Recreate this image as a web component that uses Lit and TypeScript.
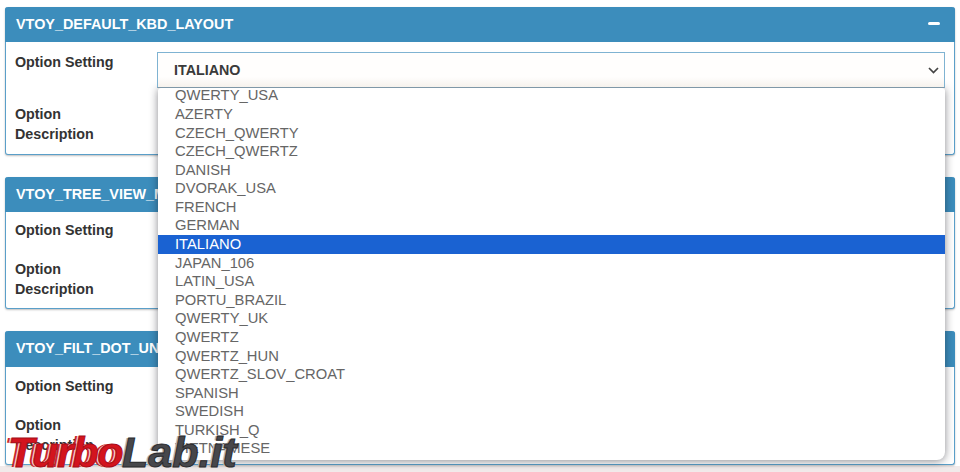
import { LitElement, html, css } from "lit";
import { customElement } from "lit/decorators.js";

const OPTIONS = [
  "QWERTY_USA",
  "AZERTY",
  "CZECH_QWERTY",
  "CZECH_QWERTZ",
  "DANISH",
  "DVORAK_USA",
  "FRENCH",
  "GERMAN",
  "ITALIANO",
  "JAPAN_106",
  "LATIN_USA",
  "PORTU_BRAZIL",
  "QWERTY_UK",
  "QWERTZ",
  "QWERTZ_HUN",
  "QWERTZ_SLOV_CROAT",
  "SPANISH",
  "SWEDISH",
  "TURKISH_Q",
  "VIETNAMESE",
];

const CARDS = [
  { name: "VTOY_DEFAULT_KBD_LAYOUT", cls: "first" },
  { name: "VTOY_TREE_VIEW_MENU_STYLE", cls: "second" },
  { name: "VTOY_FILT_DOT_UNDERSCORE_FILE", cls: "third" },
];

@customElement("app-root")
export class AppRoot extends LitElement {
  static styles = css`
    :host {
      display: block;
      position: relative;
      width: 960px;
      height: 472px;
      overflow: hidden;
      background: linear-gradient(#fff 466px, #f1eaea 466px);
      font-family: "Liberation Sans", Arial, sans-serif;
      color: #333;
    }
    .page {
      display: flex;
      flex-direction: column;
      gap: 22px;
      padding: 7px 5px 0;
    }
    .card {
      background: #fff;
      border: 1px solid #5a9fc9;
      border-top-width: 0;
      border-radius: 3px;
      box-shadow: 0 1px 2px rgba(0, 0, 0, 0.25);
      box-sizing: border-box;
    }
    .first {
      height: 148px;
    }
    .second {
      height: 132px;
    }
    .third {
      height: 134px;
    }
    .head {
      display: flex;
      justify-content: space-between;
      align-items: center;
      height: 35px;
      margin: 0 -1px;
      padding: 0 15px 2px 11px;
      box-sizing: border-box;
      background: #3c8dbc;
      border-radius: 3px 3px 0 0;
      color: #fff;
      font-size: 14.4px;
      font-weight: 700;
    }
    .third .head {
      height: 36px;
    }
    .minus {
      width: 12px;
      height: 3px;
      border-radius: 2px;
      background: #fff;
    }
    .row {
      display: flex;
      padding: 9px 9px 0;
      font-size: 14.3px;
      font-weight: 700;
      line-height: 20px;
    }
    .first .row {
      padding-top: 10px;
    }
    .second .row {
      padding-top: 8px;
    }
    .row + .gap + .row,
    .first .row + .gap + .row,
    .second .row + .gap + .row {
      padding-top: 0;
    }
    .label {
      width: 142px;
      flex: none;
    }
    .first .gap {
      height: 32px;
    }
    .second .gap,
    .third .gap {
      height: 19px;
    }
    .select {
      position: absolute;
      z-index: 1;
      left: 157px;
      top: 52px;
      width: 788px;
      height: 36px;
      box-sizing: border-box;
      display: flex;
      align-items: center;
      justify-content: space-between;
      padding: 0 5px 0 16px;
      background: linear-gradient(#fffefd 70%, #f6f2ed);
      border: 1px solid #7fb3d2;
      border-bottom-color: #7f98a8;
      font-size: 14.3px;
      font-weight: 700;
      color: #3a3a3a;
    }
    .menu {
      position: absolute;
      left: 158px;
      top: 88px;
      width: 787px;
      height: 372px;
      overflow: hidden;
      background: #fff;
      border-radius: 3px 3px 8px 8px;
      box-shadow: 0 1px 9px rgba(20, 20, 30, 0.5);
    }
    .list {
      margin-top: -1.6px;
      font-size: 14.75px;
      color: #666;
    }
    .option {
      height: 18.58px;
      line-height: 18.58px;
      padding-left: 17px;
      white-space: nowrap;
    }
    .option.on {
      background: #1a62d2;
      color: #fff;
    }
    .logo {
      position: absolute;
      z-index: 2;
      left: 8px;
      top: 428px;
      font-size: 43px;
      line-height: 48px;
      font-weight: 700;
      font-style: italic;
      white-space: nowrap;
    }
    .logo .turbo {
      letter-spacing: -1.4px;
      color: #d3141e;
      -webkit-text-stroke: 1px #a80d16;
      text-shadow: -2px 0 0 #f3c6c8, -4px 0 0 #c9232b;
    }
    .logo .lab {
      color: #47474b;
      -webkit-text-stroke: 1px #2a2a2c;
      text-shadow: -2px 0 0 #b5b5b8;
    }
  `;

  render() {
    return html`
      <div class="page">
        ${CARDS.map(
          (c) => html`
            <section class="card ${c.cls}">
              <div class="head">
                <span>${c.name}</span>
                <span class="minus"></span>
              </div>
              <div class="row"><span class="label">Option Setting</span></div>
              <div class="gap"></div>
              <div class="row"><span class="label">Option<br />Description</span></div>
            </section>
          `
        )}
      </div>
      <div class="select">
        <span>ITALIANO</span>
        <svg width="11" height="7" viewBox="0 0 11 7" fill="none" stroke="#444" stroke-width="1.7">
          <path d="M1 1l4.5 4.5L10 1" />
        </svg>
      </div>
      <div class="menu">
        <div class="list">
          ${OPTIONS.map((o) => html`<div class="option ${o === "ITALIANO" ? "on" : ""}">${o}</div>`)}
        </div>
      </div>
      <div class="logo"><span class="turbo">Turbo</span><span class="lab">Lab.it</span></div>
    `;
  }
}
